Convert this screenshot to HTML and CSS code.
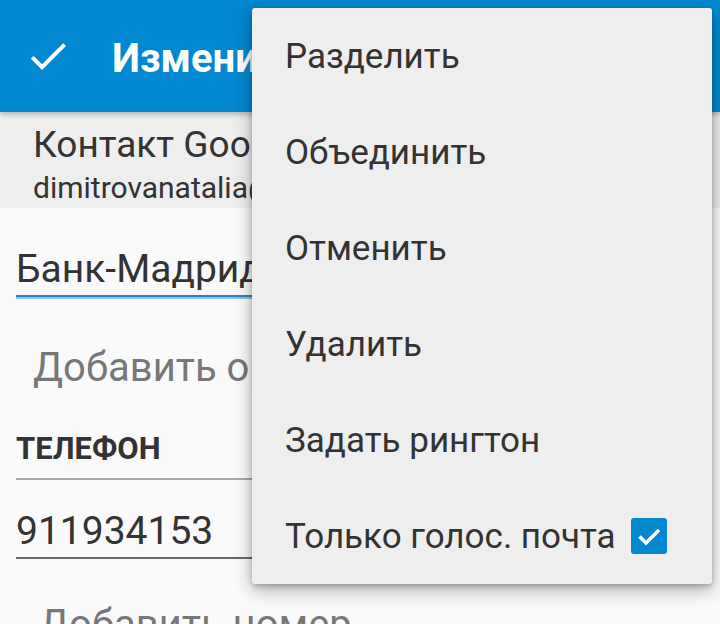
FILE: index.html
```html
<!DOCTYPE html>
<html lang="ru">
<head>
  <meta charset="UTF-8" />
  <meta name="viewport" content="width=device-width, initial-scale=1.0"/>
  <title>Изменить контакт</title>
  <link rel="stylesheet" href="styles.css">
</head>
<body>

  <header class="app-bar">
    <span class="done-btn">
      <svg viewBox="0 0 24 24" width="48" height="48"><path fill="#fff" d="M9 16.17L4.83 12l-1.42 1.41L9 19 21 7l-1.41-1.41z"/></svg>
    </span>
    <h1 class="app-title">Изменить контакт</h1>
  </header>

  <div class="account">
    <p class="account-type">Контакт Google</p>
    <p class="account-mail">dimitrovanatalia@gmail.com</p>
  </div>

  <main class="form">
    <div class="field field-active">Банк-Мадрид</div>
    <div class="add-link">Добавить организацию</div>

    <div class="section-title">ТЕЛЕФОН</div>
    <div class="field">911934153</div>
    <div class="add-link add-more">Добавить номер</div>
  </main>

  <!-- Всплывающее меню -->
  <ul class="popup-menu">
    <li>Разделить</li>
    <li>Объединить</li>
    <li>Отменить</li>
    <li>Удалить</li>
    <li>Задать рингтон</li>
    <li>Только голос. почта <span class="checkbox">
      <svg viewBox="0 0 36 36" width="36" height="36"><path fill="none" stroke="#fff" stroke-width="3.6" d="M8.5 18.5l6.5 6.5 13-13"/></svg>
    </span></li>
  </ul>

</body>
</html>
```

FILE: styles.css
```css
* { font-family:'Roboto','Noto Sans',sans-serif; margin:0; padding:0; box-sizing:border-box; }
html, body { height:100%; }
body { background:#fafafa; color:#333; overflow:hidden; position:relative; }

.app-bar {
  height:112px; background:#0288d1; display:flex; align-items:center;
  padding-left:24px; position:relative; z-index:2;
  box-shadow:0 2px 6px rgba(0,0,0,.28);
}
.done-btn { display:flex; width:48px; height:48px; }
.app-title { color:#fff; font-size:40px; font-weight:bold; margin-left:40px; padding-top:4px; white-space:nowrap; }

.account { height:96px; background:#eeeeee; padding:11px 0 0 33px; overflow:hidden; }
.account-type { font-size:37px; line-height:44px; color:#333; white-space:nowrap; }
.account-mail { font-size:30px; line-height:42px; color:#333; white-space:nowrap; }

.form { padding:0 16px; height:calc(100% - 208px); overflow:hidden; }
.field {
  font-size:39px; line-height:52px; height:54px; color:#333;
  border-bottom:2px solid #6a6a6a; margin-top:25px;
}
.field-active {
  margin-top:35px; border-bottom-color:#2f80b6;
  box-shadow:0 2px 0 #8fc3e3;
}
.add-link { font-size:40px; line-height:52px; color:#777; padding-left:17px; margin-top:45px; white-space:nowrap; }
.add-more { margin-top:40px; padding-left:23px; }

.section-title {
  font-size:31px; font-weight:bold; line-height:40px; color:#333;
  margin-top:35px; padding-bottom:9px; border-bottom:2px solid #a8a8a8;
}

/* Меню поверх содержимого */
.popup-menu {
  position:absolute; top:8px; left:252px; width:460px;
  list-style:none; background:#eeeeee; border-radius:3px; z-index:5;
  box-shadow:0 6px 18px rgba(0,0,0,.32), 0 2px 5px rgba(0,0,0,.2);
}
.popup-menu li {
  height:96px; display:flex; align-items:center; gap:15px;
  padding-left:33px; font-size:35px; color:#333; white-space:nowrap;
}
.checkbox {
  width:36px; height:36px; background:#0288d1; border-radius:3px;
  display:flex; align-items:center; justify-content:center;
}
```
